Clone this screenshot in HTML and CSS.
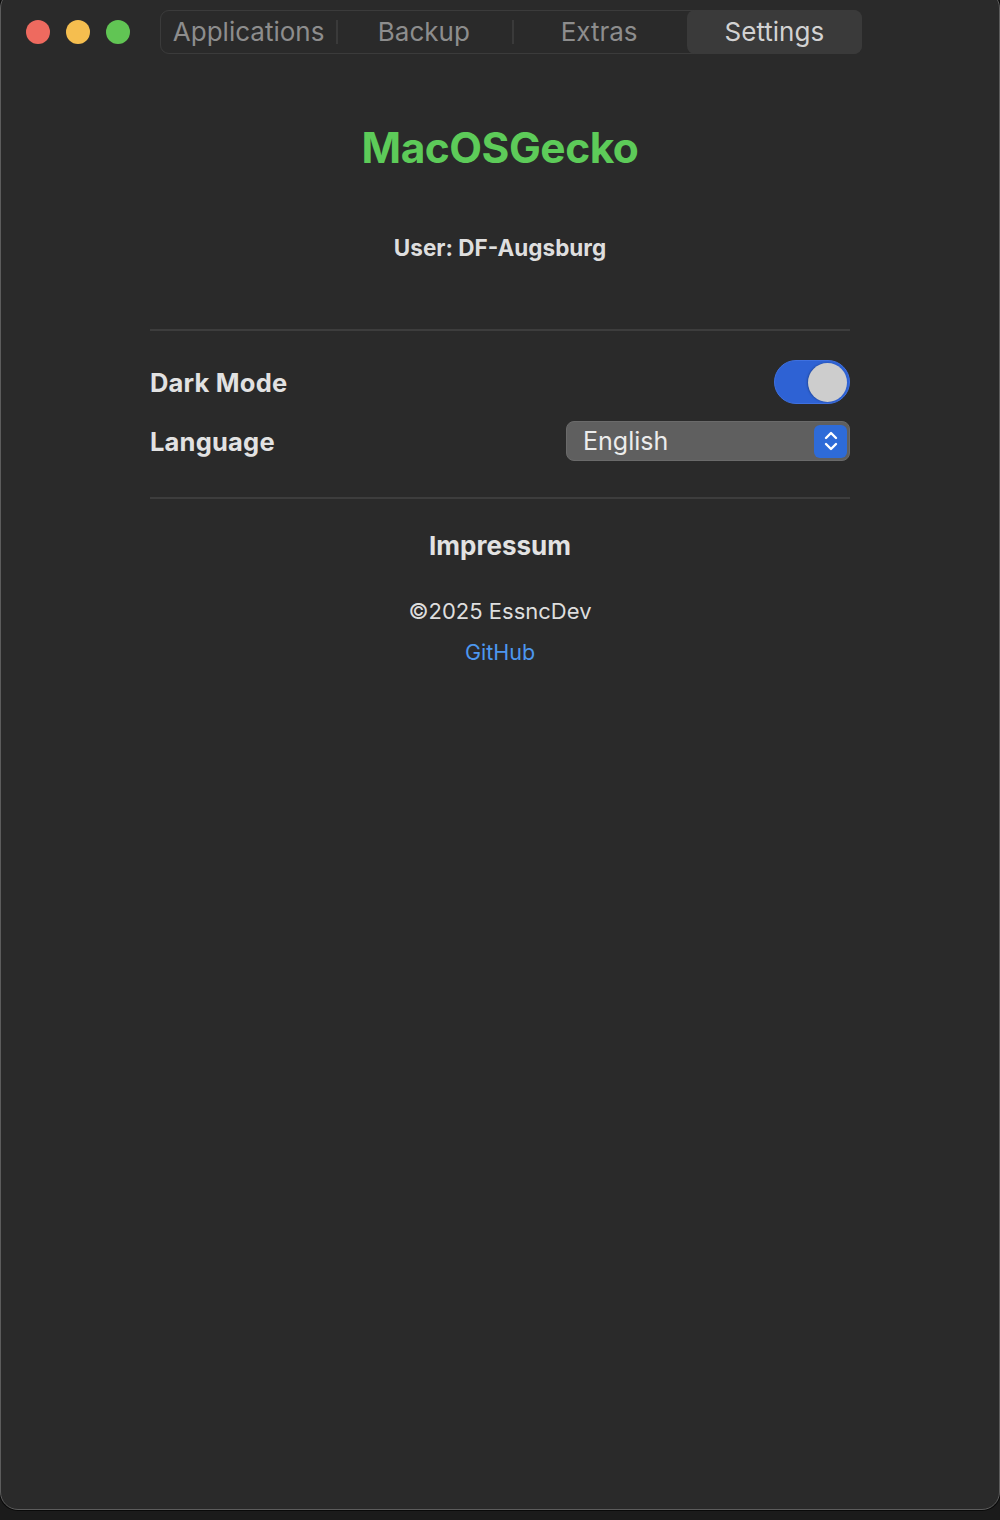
FILE: index.html
```html
<!DOCTYPE html>
<html lang="de">
<head>
<meta charset="utf-8">
<title>MacOSGecko</title>
<link rel="stylesheet" href="styles.css">
</head>
<body>
<div class="window">
  <header class="titlebar">
    <div class="lights">
      <span class="light red"></span>
      <span class="light yellow"></span>
      <span class="light green"></span>
    </div>
    <nav class="segmented">
      <span class="seg">Applications</span>
      <span class="seg">Backup</span>
      <span class="seg">Extras</span>
      <span class="seg active">Settings</span>
    </nav>
  </header>
  <main class="content">
    <h1 class="app-title">MacOSGecko</h1>
    <p class="user">User: DF-Augsburg</p>
    <hr class="sep sep-top">
    <div class="row row-dark">
      <span class="label">Dark Mode</span>
      <span class="toggle"><span class="knob"></span></span>
    </div>
    <div class="row row-lang">
      <span class="label">Language</span>
      <span class="select">
        <span class="select-text">English</span>
        <span class="stepper">
          <svg width="18" height="26" viewBox="0 0 18 26" fill="none" stroke="#fff" stroke-width="2.4" stroke-linecap="round" stroke-linejoin="round">
            <path d="M4 10 L9 5 L14 10"/>
            <path d="M4 16 L9 21 L14 16"/>
          </svg>
        </span>
      </span>
    </div>
    <hr class="sep sep-bottom">
    <h2 class="impressum">Impressum</h2>
    <p class="copy">©2025 EssncDev</p>
    <a class="link" href="#">GitHub</a>
  </main>
</div>
</body>
</html>
```
FILE: styles.css
```css
html, body {
  margin: 0;
  padding: 0;
}
body {
  background: #1b1b1b;
  font-family: Inter, "Noto Sans", "Liberation Sans", sans-serif;
  width: 1000px;
  height: 1520px;
  overflow: hidden;
}
.window {
  box-sizing: border-box;
  margin-top: -10px;
  width: 1000px;
  height: 1520px;
  background: #2a2a2a;
  border: 1px solid #5c5c5c;
  border-radius: 18px;
  box-shadow: 0 0 0 1px #0a0a0a;
  display: flex;
  flex-direction: column;
}
.titlebar {
  display: flex;
  align-items: center;
  padding: 19px 0 0 25px;
  height: 43px;
}
.lights {
  display: flex;
  gap: 16px;
}
.light {
  width: 24px;
  height: 24px;
  border-radius: 50%;
  display: block;
}
.red { background: #ee6a5f; }
.yellow { background: #f5be4f; }
.green { background: #61c554; }
.segmented {
  margin-left: 30px;
  box-sizing: border-box;
  width: 702px;
  height: 44px;
  border: 1px solid #3b3b3b;
  border-radius: 9px;
  display: flex;
  align-items: stretch;
}
.seg {
  flex: 1;
  display: flex;
  align-items: center;
  justify-content: center;
  font-size: 26px;
  color: #8d8d8d;
  position: relative;
  padding-bottom: 1px;
}
.seg + .seg::before {
  content: "";
  position: absolute;
  left: 0;
  top: 9px;
  bottom: 9px;
  width: 2px;
  background: #3a3a3a;
}
.seg.active {
  background: #3a3a3a;
  color: #d2d2d2;
  border-radius: 8px;
  margin: -1px -1px -1px 0;
}
.seg.active::before { display: none; }
.content {
  width: 700px;
  margin: 0 auto;
  display: flex;
  flex-direction: column;
  align-items: center;
}
.app-title {
  margin: 69px 0 0;
  font-size: 42.5px;
  line-height: 52px;
  font-weight: 700;
  color: #5dcb59;
  letter-spacing: -0.5px;
}
.user {
  margin: 60px 0 0;
  font-size: 22.5px;
  line-height: 28px;
  font-weight: 700;
  color: #dedede;
}
.sep {
  align-self: stretch;
  border: 0;
  height: 2px;
  background: #3d3d3d;
  margin: 0;
}
.sep-top { margin-top: 67px; }
.row {
  align-self: stretch;
  display: flex;
  justify-content: space-between;
  align-items: center;
}
.row-dark { margin-top: 29px; }
.row-lang { margin-top: 17px; }
.label {
  font-size: 25.5px;
  font-weight: 700;
  color: #e2e2e2;
  letter-spacing: 0.2px;
}
.toggle {
  box-sizing: border-box;
  width: 76px;
  height: 44px;
  border-radius: 22px;
  background: #2e62d4;
  border: 1px solid #3e70e0;
  display: flex;
  align-items: center;
  justify-content: flex-end;
  padding-right: 2px;
}
.knob {
  width: 39px;
  height: 39px;
  border-radius: 50%;
  background: #cdcdcd;
  box-shadow: -1px 0 2px rgba(0,0,0,0.25);
}
.select {
  box-sizing: border-box;
  width: 284px;
  height: 40px;
  border-radius: 8px;
  background: #5f5f5f;
  border: 1px solid #6a6a6a;
  display: flex;
  align-items: center;
  justify-content: space-between;
  padding: 0 2px 0 16px;
}
.select-text {
  font-size: 25px;
  color: #ececec;
}
.stepper {
  width: 33px;
  height: 33px;
  border-radius: 6px;
  background: #2e6bd8;
  display: flex;
  align-items: center;
  justify-content: center;
}
.sep-bottom { margin-top: 36px; }
.impressum {
  margin: 31px 0 0;
  font-size: 26px;
  line-height: 32px;
  font-weight: 700;
  color: #e2e2e2;
}
.copy {
  margin: 35px 0 0;
  font-size: 22px;
  line-height: 28px;
  color: #dedede;
}
.link {
  margin-top: 13px;
  font-size: 21.5px;
  line-height: 28px;
  color: #4d97ef;
  text-decoration: none;
}
```
